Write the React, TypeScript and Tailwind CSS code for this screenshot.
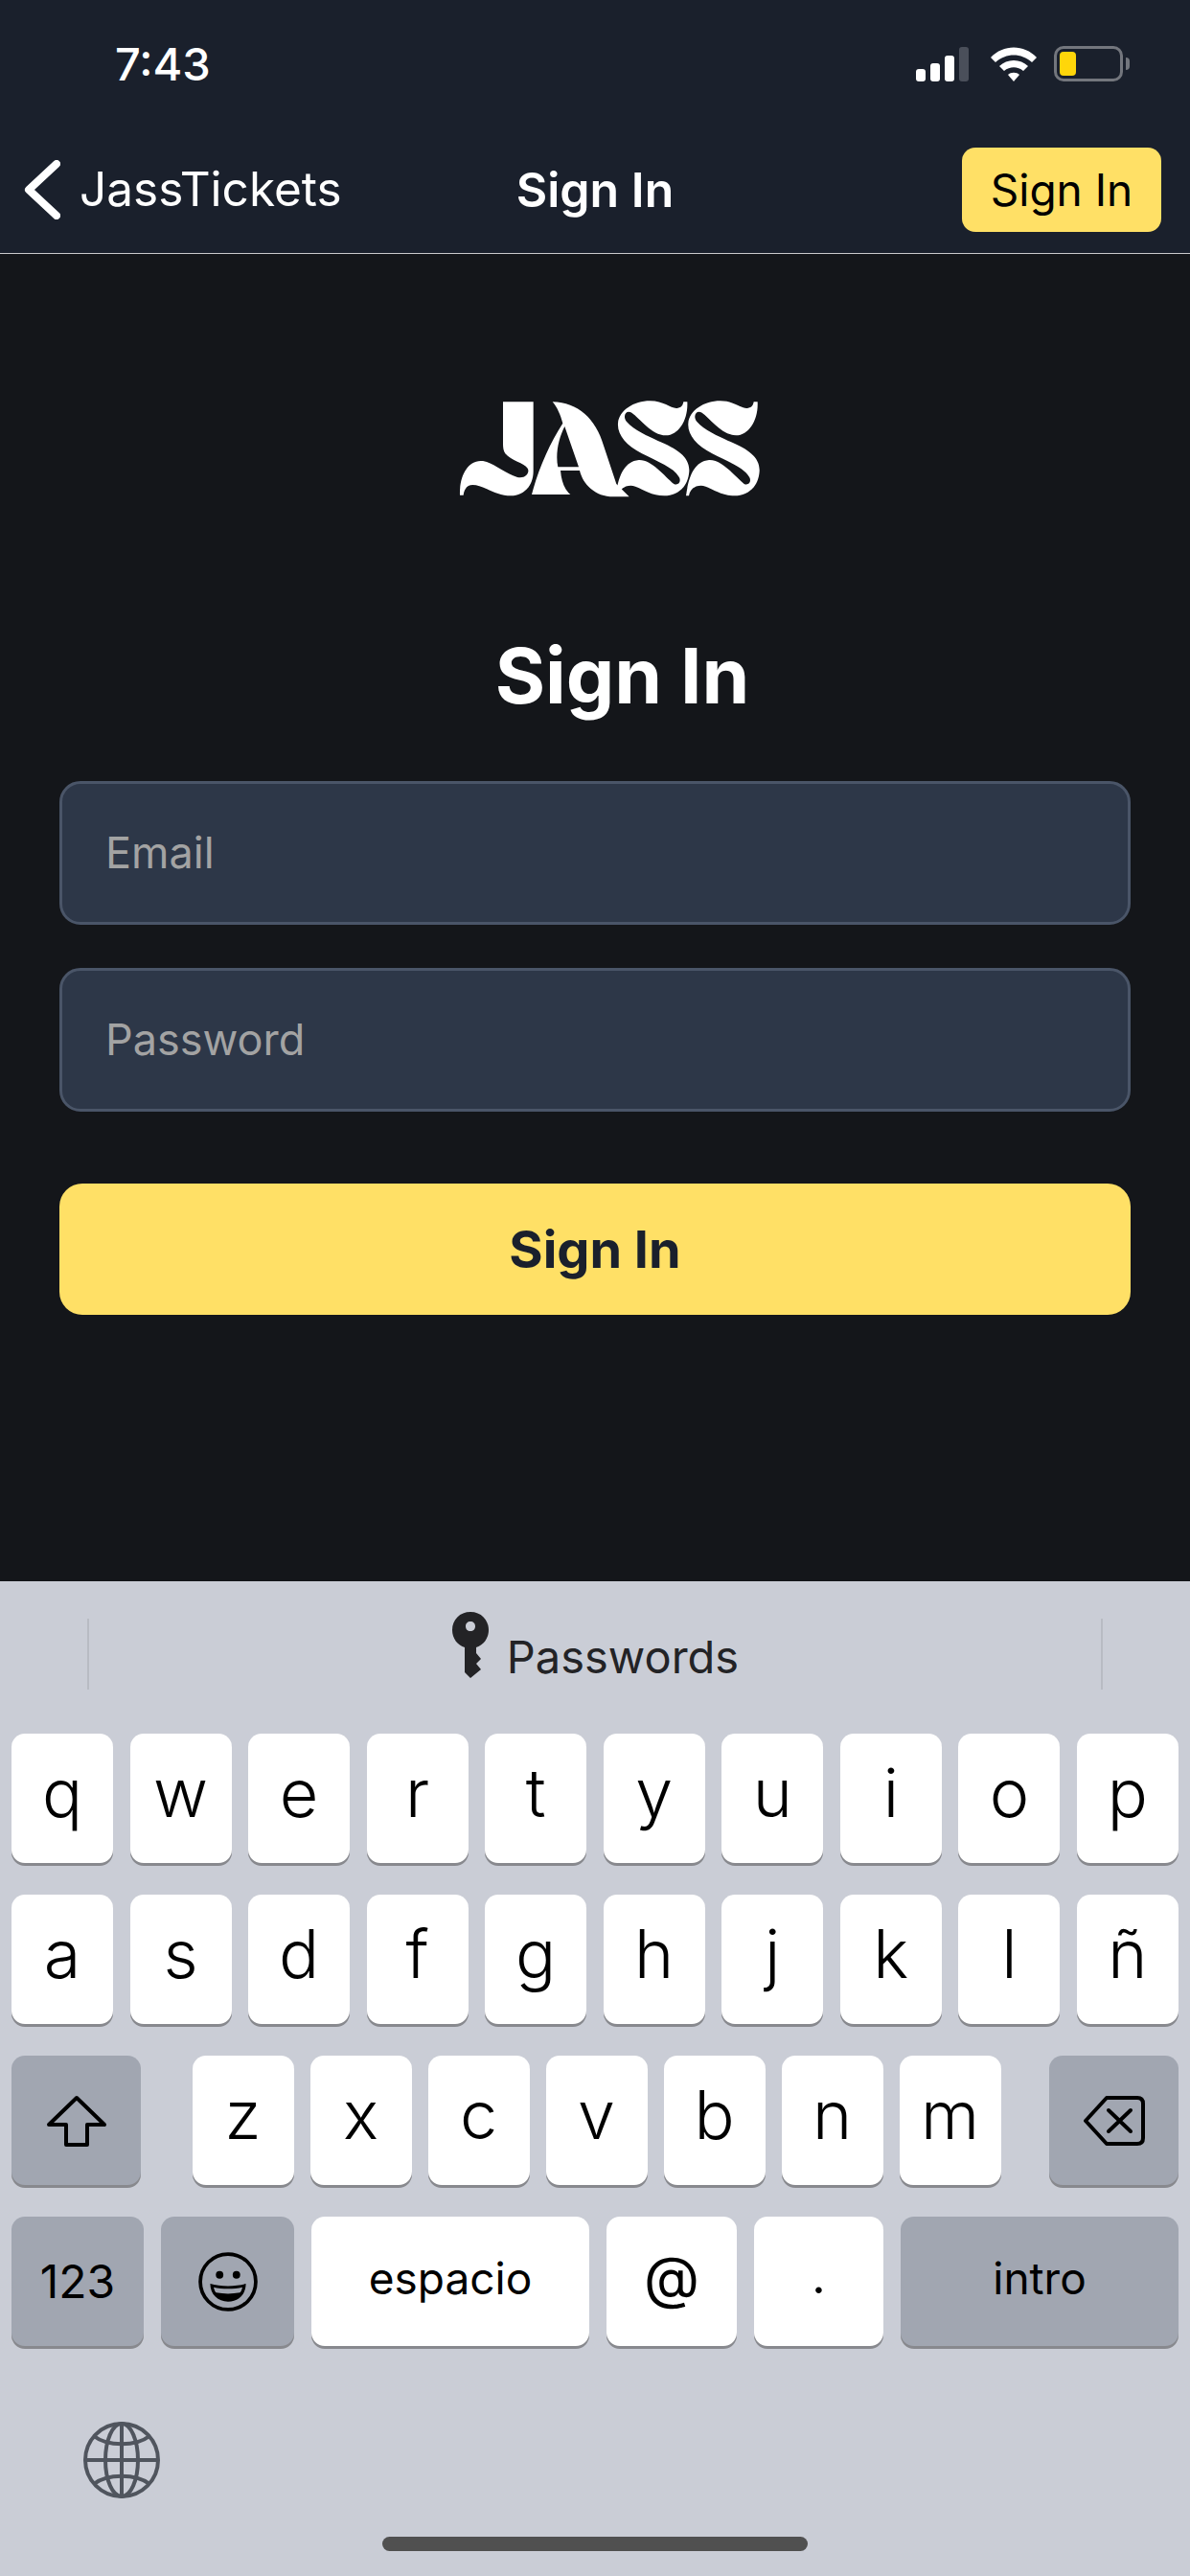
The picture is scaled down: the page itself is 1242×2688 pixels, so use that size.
import React from "react";

const row1 = ["q", "w", "e", "r", "t", "y", "u", "i", "o", "p"];
const row2 = ["a", "s", "d", "f", "g", "h", "j", "k", "l", "ñ"];
const row3 = ["z", "x", "c", "v", "b", "n", "m"];

const sPath =
  "C45 270 60 215 110 210 C150 208 190 260 220 285 C235 292 245 275 235 262 C220 235 170 215 120 190 C70 165 42 130 45 95 C48 55 95 25 145 25 C190 25 210 50 230 48 C245 46 248 38 250 28 H262 C265 85 235 132 195 133 C150 133 112 78 88 62 C70 52 58 72 72 90 C95 118 140 135 170 150 C230 175 270 200 268 245 C265 295 230 322 190 322 C140 322 110 290 85 290 C65 290 50 302 47 322 H38 Z";

const JassLogo = () => (
  <svg viewBox="0 0 990 330" className="w-[330px] h-[110px]" fill="#ffffff">
    <path d="M165 28 H260 V245 C260 295 225 322 190 322 C140 322 105 288 70 288 C52 288 43 302 41 320 H30 C28 265 50 215 95 213 C130 212 165 250 210 264 C235 270 250 250 242 236 C232 220 190 212 172 190 C166 182 165 170 165 160 Z" />
    <path
      fillRule="evenodd"
      d="M320 28 C400 30 455 80 480 165 L520 285 L560 325 H500 C450 320 415 285 405 243 H345 C348 280 360 305 376 318 H255 C275 240 310 160 352 95 C345 70 335 45 320 28 Z M358 105 L402 232 H337 C328 190 340 140 358 105 Z"
    />
    <path transform="translate(480 0)" d={`M38 322 ${sPath}`} />
    <path transform="translate(700 0)" d={`M38 322 ${sPath}`} />
  </svg>
);

const SignalIcon = () => (
  <svg width="60" height="36" viewBox="0 0 60 36">
    <rect x="0" y="23" width="10" height="13" rx="3" fill="#fff" />
    <rect x="15" y="17" width="10" height="19" rx="3" fill="#fff" />
    <rect x="30" y="9" width="10" height="27" rx="3" fill="#fff" />
    <rect x="45" y="0" width="10" height="36" rx="3" fill="#4a4f5a" />
  </svg>
);

const WifiIcon = () => (
  <svg width="48" height="36" viewBox="0 0 48 36" fill="#fff">
    <path d="M0 11 C13 -3 35 -3 48 11 L43 16 C32 6 16 6 5 16 Z" />
    <path d="M9 20 C17 12 31 12 39 20 L34 25 C28 20 20 20 14 25 Z" />
    <path d="M18 29 C21 26 27 26 30 29 L24 36 Z" />
  </svg>
);

const BatteryIcon = () => (
  <div className="flex items-center gap-[3px]">
    <div className="w-[72px] h-[37px] rounded-[10px] border-[3px] border-[#73767d] p-[3px]">
      <div className="w-[17px] h-full rounded-[4px] bg-[#ffd60a]" />
    </div>
    <div className="w-[4px] h-[13px] rounded-r-full bg-[#73767d]" />
  </div>
);

const KeyIcon = () => (
  <svg width="40" height="70" viewBox="0 0 40 70" fill="#232326">
    <path
      fillRule="evenodd"
      d="M20 1 C31 1 39 9 39 20 C39 29 33 36 26 38 V44 L31 50 L26 55 L31 61 L20 70 L14 64 V38 C7 36 1 29 1 20 C1 9 9 1 20 1 Z M20 11 C17 11 15 13 15 16 C15 19 17 21 20 21 C23 21 25 19 25 16 C25 13 23 11 20 11 Z"
    />
  </svg>
);

const ShiftIcon = () => (
  <svg width="64" height="54" viewBox="0 0 64 54" fill="none" stroke="#000" strokeWidth="4" strokeLinejoin="round">
    <path d="M32 3 L61 31 H43 V52 H21 V31 H3 Z" />
  </svg>
);

const BackspaceIcon = () => (
  <svg width="64" height="54" viewBox="0 0 64 54" fill="none" stroke="#000" strokeWidth="4" strokeLinejoin="round" strokeLinecap="round">
    <path d="M2 27 L24 3 H56 C60 3 62 5 62 9 V45 C62 49 60 51 56 51 H24 Z" />
    <path d="M26 16 L49 38 M49 16 L26 38" />
  </svg>
);

const EmojiIcon = () => (
  <svg width="62" height="62" viewBox="0 0 60 60">
    <circle cx="30" cy="30" r="28" fill="none" stroke="#000" strokeWidth="3.6" />
    <circle cx="21.5" cy="23" r="3.8" fill="#000" />
    <circle cx="38.5" cy="23" r="3.8" fill="#000" />
    <path d="M12 32 C22 35 38 35 48 32 C48 43 40 50 30 50 C20 50 12 43 12 32 Z" fill="#000" />
    <path d="M15.5 35.5 C24 37.5 36 37.5 44.5 35.5 C44 38 43 40 42 41 C34 42.5 26 42.5 18 41 C17 40 16 38 15.5 35.5 Z" fill="#a1a6b1" />
  </svg>
);

const GlobeIcon = () => (
  <svg width="80" height="80" viewBox="0 0 80 80" fill="none" stroke="#50555e" strokeWidth="4">
    <circle cx="40" cy="40" r="38" />
    <ellipse cx="40" cy="40" rx="17" ry="38" />
    <path d="M40 2 V78 M2 40 H78" />
    <path d="M11 15 C25 26 55 26 69 15 M11 65 C25 54 55 54 69 65" />
  </svg>
);

const Key = ({ children, className = "" }: { children: React.ReactNode; className?: string }) => (
  <div
    className={`h-[135px] rounded-[14px] bg-white shadow-[0_3px_0_#88898e] flex items-center justify-center text-black ${className}`}
  >
    {children}
  </div>
);

const Letter = ({ value }: { value: string }) => (
  <Key className="w-[106px] pb-[11px] text-[70px] font-light leading-none">{value}</Key>
);

export default function App() {
  return (
    <div className="w-[1242px] h-[2688px] flex flex-col overflow-hidden bg-[#14161a] font-['Inter',sans-serif]">
      <header className="h-[265px] shrink-0 bg-[#1a202c] border-b border-[#c9c9cb] text-white">
        <div className="h-[134px] flex items-start justify-between pl-[120px] pr-[63px] pt-[37px]">
          <span className="text-[47px] leading-[60px] font-medium">7:43</span>
          <div className="flex items-center gap-[18px] pt-[11px]">
            <SignalIcon />
            <WifiIcon />
            <BatteryIcon />
          </div>
        </div>
        <div className="relative flex items-center justify-between h-[88px] mt-[20px] pl-[25px] pr-[30px]">
          <div className="flex items-center gap-[20px]">
            <svg width="38" height="62" viewBox="0 0 38 62" fill="none" stroke="#fff" strokeWidth="8" strokeLinecap="round" strokeLinejoin="round">
              <path d="M34 4 L5 31 L34 58" />
            </svg>
            <span className="text-[49.5px] leading-none font-normal">JassTickets</span>
          </div>
          <span className="absolute left-0 right-0 text-center text-[50px] leading-none font-semibold">Sign In</span>
          <div className="w-[208px] h-[88px] rounded-[14px] bg-[#ffe066] flex items-center justify-center text-black text-[46px] font-normal">
            Sign In
          </div>
        </div>
      </header>

      <main className="flex-1 flex flex-col items-stretch px-[62px]">
        <div className="flex justify-center mt-[145px] pl-[28px]">
          <JassLogo />
        </div>
        <h1 className="mt-[135px] pl-[57px] text-center text-white text-[80px] leading-[100px] font-bold">Sign In</h1>
        <div className="mt-[60px] flex flex-col gap-[45px]">
          <div className="h-[150px] rounded-[22px] border-[3px] border-[#4a5568] bg-[#2d3748] flex items-center pl-[45px] text-[#a3a3a3] text-[45px]">
            Email
          </div>
          <div className="h-[150px] rounded-[22px] border-[3px] border-[#4a5568] bg-[#2d3748] flex items-center pl-[45px] text-[#a3a3a3] text-[45px]">
            Password
          </div>
        </div>
        <div className="mt-[75px] h-[137px] rounded-[24px] bg-[#ffe066] flex items-center justify-center text-[#1a202c] text-[54px] font-bold">
          Sign In
        </div>
      </main>

      <section className="h-[1038px] shrink-0 bg-[#cacdd6] flex flex-col">
        <div className="h-[159px] flex items-center justify-between px-[91px] pb-[22px]">
          <div className="w-[2px] h-[74px] self-start mt-[39px] bg-[#b8bbc3]" />
          <div className="flex items-end gap-[18px] text-[#232326]">
            <div className="mb-[6px]">
              <KeyIcon />
            </div>
            <span className="text-[47px] leading-[56px]">Passwords</span>
          </div>
          <div className="w-[2px] h-[74px] self-start mt-[39px] bg-[#b8bbc3]" />
        </div>

        <div className="px-[12px] flex flex-col gap-[33px]">
          <div className="flex justify-between">
            {row1.map((k) => (
              <Letter key={k} value={k} />
            ))}
          </div>
          <div className="flex justify-between">
            {row2.map((k) => (
              <Letter key={k} value={k} />
            ))}
          </div>
          <div className="flex justify-between">
            <Key className="w-[135px] !bg-[#a1a6b1]">
              <ShiftIcon />
            </Key>
            <div className="flex gap-[17px] ml-[3px]">
              {row3.map((k) => (
                <Letter key={k} value={k} />
              ))}
            </div>
            <Key className="w-[135px] !bg-[#a1a6b1]">
              <BackspaceIcon />
            </Key>
          </div>
          <div className="flex gap-[18px]">
            <Key className="w-[138px] !bg-[#a1a6b1] text-[48px]">123</Key>
            <Key className="w-[139px] !bg-[#a1a6b1]">
              <EmojiIcon />
            </Key>
            <Key className="w-[290px] text-[46px] pb-[6px]">espacio</Key>
            <Key className="w-[136px] text-[60px] pb-[10px]">@</Key>
            <Key className="w-[135px] text-[50px] pb-[10px]">.</Key>
            <Key className="w-[290px] !bg-[#a1a6b1] text-[46px] pb-[6px]">intro</Key>
          </div>
        </div>

        <div className="pl-[87px] mt-[79px]">
          <GlobeIcon />
        </div>
        <div className="mt-[40px] mx-auto w-[444px] h-[15px] rounded-full bg-[#505050]" />
      </section>
    </div>
  );
}
